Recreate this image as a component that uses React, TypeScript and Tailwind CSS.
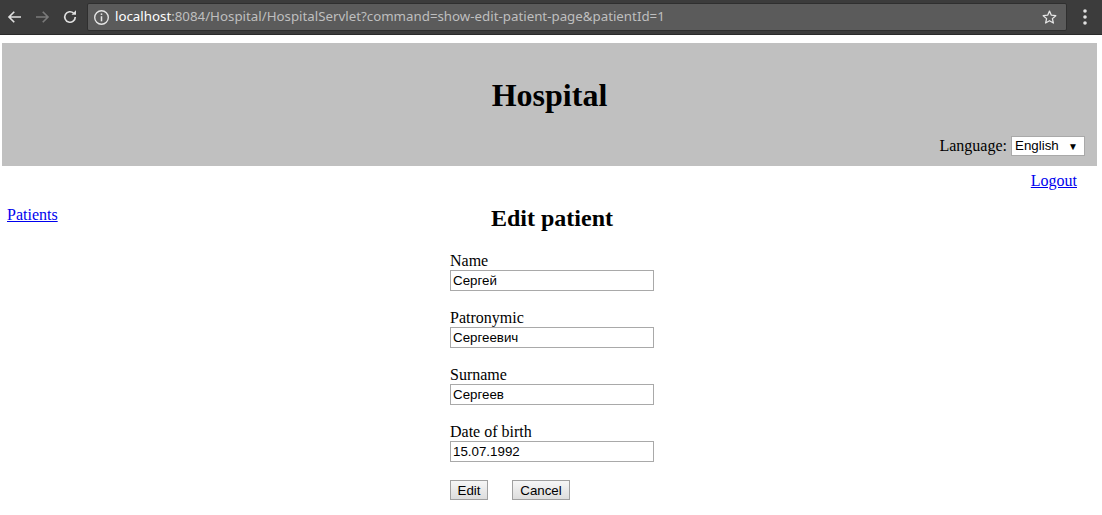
import { useState } from 'react';

const serif = "font-['Liberation_Serif','Times_New_Roman',serif]";
const sans = "font-['Liberation_Sans',Arial,sans-serif]";

function BrowserBar() {
  return (
    <div className="flex h-[35px] items-center bg-[#3c3c3c] border-b border-[#2a2a2a]">
      <div className="flex w-[87px] items-center pl-[4px] text-[#d8d8d8]">
        <svg width="18" height="18" viewBox="0 0 24 24" className="ml-[2px]">
          <path d="M20 12H5M11 5l-7 7 7 7" fill="none" stroke="#e0e0e0" strokeWidth="2.2" />
        </svg>
        <svg width="18" height="18" viewBox="0 0 24 24" className="ml-[9px]">
          <path d="M4 12h15M13 5l7 7-7 7" fill="none" stroke="#7a7a7a" strokeWidth="2.2" />
        </svg>
        <svg width="18" height="18" viewBox="0 0 24 24" className="ml-[10px]">
          <path d="M19 12a7 7 0 1 1-2.1-5" fill="none" stroke="#e0e0e0" strokeWidth="2.2" />
          <path d="M20 3v6h-6z" fill="#e0e0e0" />
        </svg>
      </div>
      <div className="flex h-[28px] w-[980px] items-center rounded-[2px] border border-[#2f2f2f] bg-[#5b5b5b] pl-[5px] pr-[8px]">
        <svg width="17" height="17" viewBox="0 0 20 20">
          <circle cx="10" cy="10" r="8" fill="none" stroke="#e6e6e6" strokeWidth="1.6" />
          <rect x="9.1" y="8.5" width="1.8" height="6" fill="#e6e6e6" />
          <rect x="9.1" y="5.2" width="1.8" height="1.8" fill="#e6e6e6" />
        </svg>
        <div className="ml-[5px] flex-1 text-[13.3px] font-['Noto_Sans',sans-serif]">
          <span className="text-white">localhost</span>
          <span className="text-[#bfbfbf]">:8084/Hospital/HospitalServlet?command=show-edit-patient-page&amp;patientId=1</span>
        </div>
        <svg width="17" height="17" viewBox="0 0 24 24">
          <path
            d="M12 3l2.6 5.8 6.3.6-4.8 4.2 1.4 6.2L12 16.6 6.5 19.8l1.4-6.2L3.1 9.4l6.3-.6z"
            fill="none"
            stroke="#e6e6e6"
            strokeWidth="1.8"
            strokeLinejoin="round"
          />
        </svg>
      </div>
      <div className="flex flex-1 justify-center">
        <svg width="6" height="18" viewBox="0 0 6 18">
          <circle cx="3" cy="3" r="1.8" fill="#e0e0e0" />
          <circle cx="3" cy="9" r="1.8" fill="#e0e0e0" />
          <circle cx="3" cy="15" r="1.8" fill="#e0e0e0" />
        </svg>
      </div>
    </div>
  );
}

function Field({ label, value }: { label: string; value: string }) {
  const [v, setV] = useState(value);
  return (
    <div className="mb-[18px]">
      <div className="text-[16px] leading-[18px]">{label}</div>
      <input
        value={v}
        onChange={(e) => setV(e.target.value)}
        className={`block h-[21px] w-[204px] border border-[#a9a9a9] bg-white px-[2px] text-[13.33px] text-black outline-none ${sans}`}
      />
    </div>
  );
}

export default function App() {
  return (
    <div className={`min-h-[515px] bg-white text-black ${serif}`}>
      <BrowserBar />

      <div className="ml-[2px] mr-[5px] mt-[8px] flex h-[123px] flex-col bg-[#c0c0c0]">
        <h1 className="mt-[34px] text-center text-[32px] font-bold leading-[37px]">Hospital</h1>
        <div className="mt-[20px] flex items-center justify-end pr-[12px] text-[16px]">
          <span className="mr-[4px]">Language:</span>
          <div className={`flex h-[20px] w-[74px] items-center justify-between border border-[#a9a9a9] bg-white pl-[3px] pr-[6px] text-[13.33px] ${sans}`}>
            <span>English</span>
            <span className="text-[10px]">▼</span>
          </div>
        </div>
      </div>

      <div className="mt-[6px] flex justify-end pr-[25px] text-[16px] leading-[18px]">
        <a href="#" className="text-[#0000ee] underline">Logout</a>
      </div>

      <div className="mt-[14px] grid grid-cols-[1fr_204px_1fr] pl-[2px]">
        <div className="pl-[5px] pt-[2px] text-[16px] leading-[18px]">
          <a href="#" className="text-[#0000ee] underline">Patients</a>
        </div>
        <div>
          <h2 className="mb-[20px] whitespace-nowrap text-center text-[24px] font-bold leading-[28px]">Edit patient</h2>
          <Field label="Name" value="Сергей" />
          <Field label="Patronymic" value="Сергеевич" />
          <Field label="Surname" value="Сергеев" />
          <Field label="Date of birth" value="15.07.1992" />
          <div className={`mt-[1px] flex gap-[24px] text-[13.33px] ${sans}`}>
            <button className="h-[20px] w-[38px] border border-[#a0a0a0] bg-gradient-to-b from-[#f6f6f6] to-[#dddddd]">Edit</button>
            <button className="h-[20px] w-[58px] border border-[#a0a0a0] bg-gradient-to-b from-[#f6f6f6] to-[#dddddd]">Cancel</button>
          </div>
        </div>
        <div />
      </div>
    </div>
  );
}
